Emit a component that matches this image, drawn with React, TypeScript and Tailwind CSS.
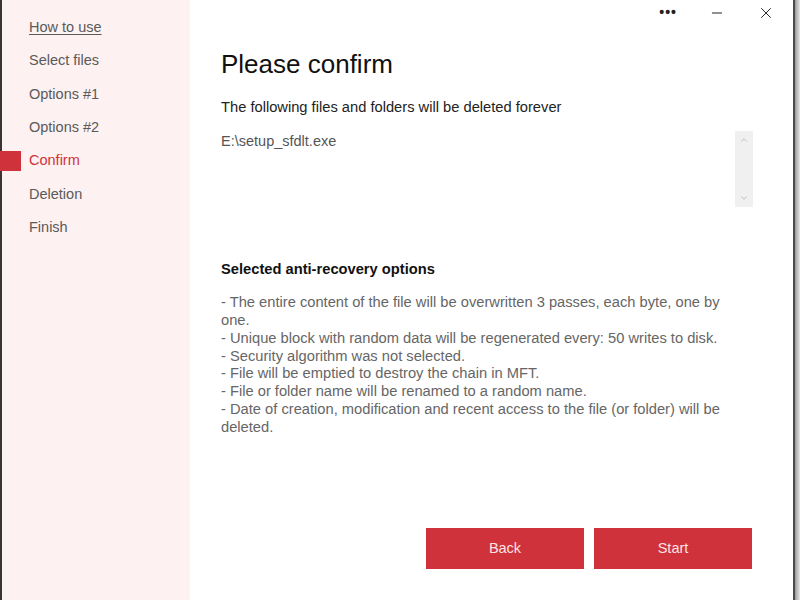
import { ChevronDown, ChevronUp, Minus, X } from "lucide-react";

const steps = ["How to use", "Select files", "Options #1", "Options #2", "Confirm", "Deletion", "Finish"];

const options = [
  "- The entire content of the file will be overwritten 3 passes, each byte, one by one.",
  "- Unique block with random data will be regenerated every: 50 writes to disk.",
  "- Security algorithm was not selected.",
  "- File will be emptied to destroy the chain in MFT.",
  "- File or folder name will be renamed to a random name.",
  "- Date of creation, modification and recent access to the file (or folder) will be deleted.",
];

export default function App() {
  return (
    <div
      className="w-[800px] h-[600px] flex bg-white overflow-hidden"
      style={{ fontFamily: '"Liberation Sans", Arial, sans-serif' }}
    >
      <div className="w-[2px] bg-[#3a3436]" />

      {/* sidebar */}
      <aside className="w-[188px] bg-[#fdf1f1] pt-[11px]">
        <ul className="text-[14.5px] text-[#5a5a5a]">
          {steps.map((s, i) => (
            <li key={s} className="relative h-[33.4px] flex items-center pl-[27px]">
              {s === "Confirm" && <span className="absolute -left-[2px] top-[6px] w-[21px] h-[20px] bg-[#d0323b]" />}
              <span className={i === 0 ? "underline underline-offset-2" : s === "Confirm" ? "text-[#d0323b]" : ""}>{s}</span>
            </li>
          ))}
        </ul>
      </aside>

      {/* main */}
      <main className="flex-1 flex flex-col pl-[31px] pr-[40px]">
        <div className="h-[26px] flex items-center justify-end gap-[32px] -mr-[22px] text-[#222]">
          <span className="text-[14px] font-bold tracking-[1px] leading-none -mt-[2px]">•••</span>
          <Minus className="w-[16px] h-[16px]" strokeWidth={1.5} />
          <X className="w-[18px] h-[18px]" strokeWidth={1.3} />
        </div>

        <h1 className="mt-[22px] text-[26px] leading-[32px] text-[#111]">Please confirm</h1>
        <p className="mt-[16px] text-[14.7px] text-[#222]">The following files and folders will be deleted forever</p>

        <div className="mt-[13px] h-[77px] flex justify-between">
          <div className="text-[14.5px] text-[#555]">E:\setup_sfdlt.exe</div>
          <div className="w-[18px] h-[76px] bg-[#f0f0f0] flex flex-col justify-between items-center py-[4px] text-[#b5b5b5]">
            <ChevronUp className="w-[10px] h-[10px]" strokeWidth={2} />
            <ChevronDown className="w-[10px] h-[10px]" strokeWidth={2} />
          </div>
        </div>

        <h2 className="mt-[50px] text-[14.7px] font-bold text-[#111]">Selected anti-recovery options</h2>
        <div className="mt-[14px] w-[510px] text-[14.7px] leading-[17.85px] text-[#666]">
          {options.map((o) => (
            <p key={o}>{o}</p>
          ))}
        </div>

        <div className="mt-auto mb-[31px] flex justify-end gap-[10px] mr-[1px]">
          <button className="w-[158px] h-[41px] bg-[#d0323b] text-[#fbe4e4] text-[14.5px]">Back</button>
          <button className="w-[158px] h-[41px] bg-[#d0323b] text-[#fbe4e4] text-[14.5px]">Start</button>
        </div>
      </main>

      <div className="w-[2px] bg-[#4a4a4a]" />
      <div className="w-[5px] bg-gradient-to-r from-[#9a9a9a] to-[#e8e8e8]" />
    </div>
  );
}
